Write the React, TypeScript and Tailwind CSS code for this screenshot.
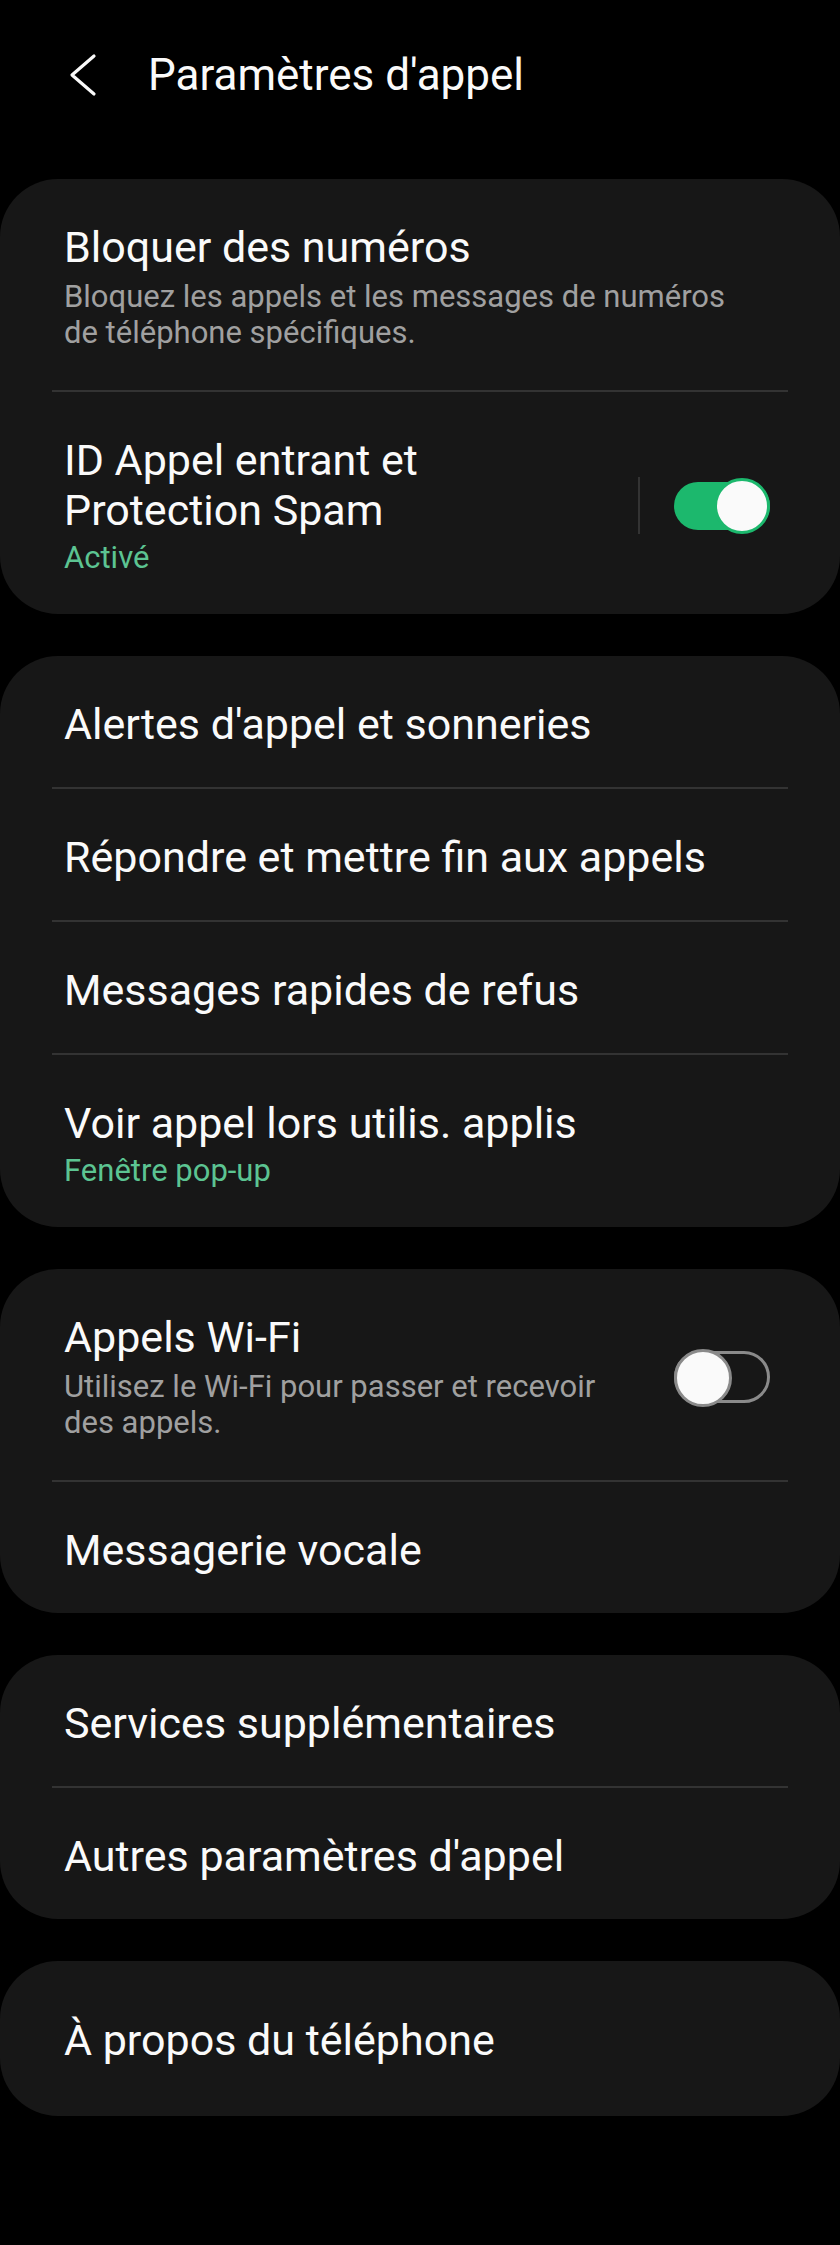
import React from "react";

type RowProps = {
  title: string;
  sub?: string;
  green?: string;
  toggle?: "on" | "off";
  tall?: boolean;
};

const Divider = () => <div className="mx-[52px] h-[2px] bg-[#333333]" />;

const Toggle = ({ on }: { on: boolean }) =>
  on ? (
    <div className="flex items-center gap-[34px]">
      <div className="h-[57px] w-[2px] bg-[#333333]" />
      <div className="relative h-[48px] w-[96px] rounded-full bg-[#1cb86d]">
        <div className="absolute -top-[4px] right-0 h-[56px] w-[56px] rounded-full border-[3px] border-[#1cb86d] bg-[#fafafa]" />
      </div>
    </div>
  ) : (
    <div className="relative h-[52px] w-[96px] rounded-full border-[3px] border-[#8a8a8a]">
      <div className="absolute -top-[5px] -left-[3px] h-[58px] w-[58px] rounded-full border-[3px] border-[#8a8a8a] bg-[#fafafa]" />
    </div>
  );

const Row = ({ title, sub, green, toggle, tall }: RowProps) => (
  <div
    className={`flex items-center pl-[64px] pr-[70px] ${
      tall ? "pt-[54px] pb-[51px]" : sub ? "pt-[43px] pb-[39px]" : "pt-[43px] pb-[38px]"
    }`}
  >
    <div className={toggle ? "flex-1 pr-[40px]" : "flex-1"}>
      <div className="text-[43px] leading-[50px] text-[#fafafa]">{title}</div>
      {sub && (
        <div className="mt-[7px] max-w-[680px] text-[31px] leading-[36px] text-[#a0a0a0]">
          {sub}
        </div>
      )}
      {green && (
        <div className="mt-[5px] text-[31px] leading-[36px] text-[#5cc492]">
          {green}
        </div>
      )}
    </div>
    {toggle && <Toggle on={toggle === "on"} />}
  </div>
);

const Card = ({ children }: { children: React.ReactNode }) => (
  <div className="rounded-[58px] bg-[#171717]">{children}</div>
);

export default function App() {
  return (
    <div
      className="min-h-[2245px] w-[840px] bg-black"
      style={{ fontFamily: "Roboto, 'Noto Sans', sans-serif" }}
    >
      <header className="flex h-[150px] items-center">
        <svg
          className="ml-[69px]"
          width="28"
          height="44"
          viewBox="0 0 28 44"
          fill="none"
          stroke="#fafafa"
          strokeWidth="3.2"
          strokeLinecap="round"
          strokeLinejoin="round"
        >
          <path d="M25 3 L3 22 L25 41" />
        </svg>
        <h1 className="ml-[51px] text-[44px] leading-[52px] text-[#fafafa]">
          Paramètres d'appel
        </h1>
      </header>

      <main className="flex flex-col gap-[42px] pt-[29px]">
        <Card>
          <Row
            title="Bloquer des numéros"
            sub="Bloquez les appels et les messages de numéros de téléphone spécifiques."
          />
          <Divider />
          <Row
            title="ID Appel entrant et Protection Spam"
            green="Activé"
            toggle="on"
          />
        </Card>

        <Card>
          <Row title="Alertes d'appel et sonneries" />
          <Divider />
          <Row title="Répondre et mettre fin aux appels" />
          <Divider />
          <Row title="Messages rapides de refus" />
          <Divider />
          <Row title="Voir appel lors utilis. applis" green="Fenêtre pop-up" />
        </Card>

        <Card>
          <Row
            title="Appels Wi-Fi"
            sub="Utilisez le Wi-Fi pour passer et recevoir des appels."
            toggle="off"
          />
          <Divider />
          <Row title="Messagerie vocale" />
        </Card>

        <Card>
          <Row title="Services supplémentaires" />
          <Divider />
          <Row title="Autres paramètres d'appel" />
        </Card>

        <Card>
          <Row title="À propos du téléphone" tall />
        </Card>
      </main>
    </div>
  );
}
